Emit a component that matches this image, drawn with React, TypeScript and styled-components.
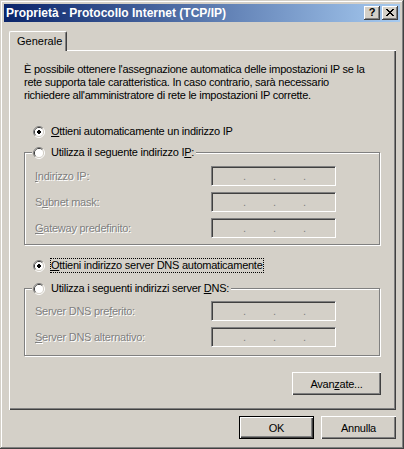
import React from 'react';
import styled, { createGlobalStyle } from 'styled-components';

const face = '#D4D0C8';
const light = '#FFFFFF';
const shadow = '#808080';
const dark = '#404040';

const GlobalStyle = createGlobalStyle`
    html, body {
        margin: 0;
        padding: 0;
        background: ${face};
    }
    body {
        font-family: 'Liberation Sans', Arial, sans-serif;
        font-size: 11px;
        color: #000;
    }
    * {
        box-sizing: border-box;
    }
`;

const Window = styled.div`
    width: 404px;
    height: 449px;
    padding: 4px;
    background: ${face};
    box-shadow: inset -1px -1px 0 ${dark}, inset 1px 1px 0 ${face}, inset -2px -2px 0 ${shadow},
        inset 2px 2px 0 ${light};
    display: flex;
    flex-direction: column;
`;

const TitleBar = styled.div`
    flex: none;
    height: 18px;
    display: flex;
    align-items: center;
    padding: 0 2px 0 2px;
    background: linear-gradient(to right, #0a246a, #a6caf0);
`;

const Title = styled.span`
    flex: 1;
    color: #fff;
    font-weight: bold;
    font-size: 12px;
    white-space: nowrap;
`;

const CaptionButton = styled.button<{ $gap?: number }>`
    width: 16px;
    height: 14px;
    margin-left: ${(p) => p.$gap ?? 0}px;
    padding: 0 0 1px 0;
    border: 0;
    background: ${face};
    box-shadow: inset -1px -1px 0 ${dark}, inset 1px 1px 0 ${light}, inset -2px -2px 0 ${shadow};
    display: flex;
    align-items: center;
    justify-content: center;
    font-family: 'Liberation Sans', Arial, sans-serif;
    font-weight: bold;
    font-size: 11px;
    line-height: 11px;
    color: #000;
`;

const Body = styled.div`
    flex: 1;
    display: flex;
    flex-direction: column;
    padding: 9px 4px 6px 5px;
`;

const TabStrip = styled.div`
    display: flex;
`;

const Tab = styled.div`
    position: relative;
    z-index: 1;
    width: 58px;
    height: 20px;
    margin-bottom: -1px;
    padding: 3px 0 0 7px;
    line-height: 13px;
    background: ${face};
    border-top: 1px solid ${light};
    border-left: 1px solid ${light};
    border-right: 1px solid ${dark};
    border-radius: 2px 2px 0 0;
    box-shadow: inset -1px 0 0 ${shadow};
`;

const Panel = styled.div`
    flex: 1;
    display: flex;
    flex-direction: column;
    padding: 13px 15px 0 15px;
    background: ${face};
    box-shadow: inset 1px 1px 0 ${light}, inset -1px -1px 0 ${dark}, inset -2px -2px 0 ${shadow};
`;

const Intro = styled.p`
    margin: 0;
    line-height: 13px;
    letter-spacing: -0.25px;
    white-space: nowrap;
`;

const RadioRow = styled.div<{ $top: number }>`
    margin-top: ${(p) => p.$top}px;
    padding-left: 9px;
    height: 13px;
    display: flex;
    align-items: center;
    gap: 6px;
`;

const RadioText = styled.span<{ $focused?: boolean }>`
    display: inline-block;
    line-height: 13px;
    letter-spacing: -0.25px;
    white-space: nowrap;
    outline: ${(p) => (p.$focused ? '1px dotted #000' : 'none')};
`;

const RadioSvg = styled.svg`
    flex: none;
    display: block;
`;

const Group = styled.fieldset<{ $top: number; $padTop: number; $padBottom: number }>`
    margin: ${(p) => p.$top}px 1px 0 0;
    padding: ${(p) => p.$padTop}px 0 ${(p) => p.$padBottom}px 7px;
    border: 1px solid ${shadow};
    box-shadow: inset 1px 1px 0 ${light}, 1px 1px 0 ${light};
    min-width: 0;
`;

const GroupLegend = styled.legend`
    margin-left: 0;
    padding: 0 2px 0 1px;
    height: 13px;
    display: flex;
    align-items: center;
    gap: 6px;
    background: ${face};
`;

const FieldList = styled.div`
    display: flex;
    flex-direction: column;
    gap: 6px;
    padding-left: 3px;
`;

const FieldRow = styled.div`
    display: flex;
    align-items: center;
    height: 20px;
`;

const FieldLabel = styled.span`
    width: 176px;
    color: ${shadow};
    text-shadow: 1px 1px 0 ${light};
    letter-spacing: -0.25px;
    white-space: nowrap;
`;

const IpBox = styled.div`
    width: 125px;
    height: 20px;
    display: flex;
    align-items: flex-start;
    padding-top: 3px;
    background: ${face};
    border-top: 1px solid ${shadow};
    border-left: 1px solid ${shadow};
    border-bottom: 1px solid ${light};
    border-right: 1px solid ${light};
    box-shadow: inset 1px 1px 0 ${dark};
`;

const IpSeg = styled.span<{ $w: number }>`
    width: ${(p) => p.$w}px;
    flex: none;
`;

const IpDot = styled.span`
    width: 3px;
    flex: none;
    line-height: 13px;
    color: ${shadow};
`;

const PushButton = styled.button<{ $width: number; $isDefault?: boolean }>`
    width: ${(p) => p.$width}px;
    height: 23px;
    padding: 0;
    font-family: 'Liberation Sans', Arial, sans-serif;
    font-size: 11px;
    letter-spacing: -0.25px;
    color: #000;
    background: ${face};
    border: ${(p) => (p.$isDefault ? '1px solid #000' : '0')};
    box-shadow: inset 1px 1px 0 ${light}, inset -1px -1px 0 ${dark}, inset -2px -2px 0 ${shadow};
`;

const PanelActions = styled.div`
    margin-top: 16px;
    display: flex;
    justify-content: flex-end;
`;

const DialogButtons = styled.div`
    margin-top: 6px;
    display: flex;
    justify-content: flex-end;
    gap: 7px;
`;

const Radio: React.FC<{ checked?: boolean }> = ({ checked }) => (
    <RadioSvg width="12" height="12" viewBox="0 0 12 12">
        <path d="M2.11 9.89A5.5 5.5 0 0 1 9.89 2.11" stroke={shadow} fill="none" />
        <path d="M9.89 2.11A5.5 5.5 0 0 1 2.11 9.89" stroke={light} fill="none" />
        <path d="M2.82 9.18A4.5 4.5 0 0 1 9.18 2.82" stroke={dark} fill="none" />
        <path d="M9.18 2.82A4.5 4.5 0 0 1 2.82 9.18" stroke={face} fill="none" />
        <circle cx="6" cy="6" r="4" fill={light} />
        {checked && (
            <g fill="#000" shapeRendering="crispEdges">
                <rect x="4" y="5" width="4" height="2" />
                <rect x="5" y="4" width="2" height="4" />
            </g>
        )}
    </RadioSvg>
);

const CloseGlyph = () => (
    <svg width="8" height="7" viewBox="0 0 8 7" shapeRendering="crispEdges">
        <path
            fill="#000"
            d="M0 0h2v1H0zM6 0h2v1H6zM1 1h2v1H1zM5 1h2v1H5zM2 2h4v1H2zM3 3h2v1H3zM2 4h4v1H2zM1 5h2v1H1zM5 5h2v1H5zM0 6h2v1H0zM6 6h2v1H6z"
        />
    </svg>
);

const IpField = () => (
    <IpBox>
        <IpSeg $w={31} />
        <IpDot>.</IpDot>
        <IpSeg $w={27} />
        <IpDot>.</IpDot>
        <IpSeg $w={27} />
        <IpDot>.</IpDot>
    </IpBox>
);

export default function App() {
    return (
        <>
            <GlobalStyle />
            <Window>
                <TitleBar>
                    <Title>Proprietà - Protocollo Internet (TCP/IP)</Title>
                    <CaptionButton>?</CaptionButton>
                    <CaptionButton $gap={2}>
                        <CloseGlyph />
                    </CaptionButton>
                </TitleBar>
                <Body>
                    <TabStrip>
                        <Tab>Generale</Tab>
                    </TabStrip>
                    <Panel>
                        <Intro>
                            È possibile ottenere l'assegnazione automatica delle impostazioni IP se la
                            <br />
                            rete supporta tale caratteristica. In caso contrario, sarà necessario
                            <br />
                            richiedere all'amministratore di rete le impostazioni IP corrette.
                        </Intro>

                        <RadioRow $top={23}>
                            <Radio checked />
                            <RadioText>
                                <u>O</u>ttieni automaticamente un indirizzo IP
                            </RadioText>
                        </RadioRow>

                        <Group $top={8} $padTop={7} $padBottom={6}>
                            <GroupLegend>
                                <Radio />
                                <RadioText>
                                    Utilizza il seguente indirizzo I<u>P</u>:
                                </RadioText>
                            </GroupLegend>
                            <FieldList>
                                <FieldRow>
                                    <FieldLabel>
                                        <u>I</u>ndirizzo IP:
                                    </FieldLabel>
                                    <IpField />
                                </FieldRow>
                                <FieldRow>
                                    <FieldLabel>
                                        S<u>u</u>bnet mask:
                                    </FieldLabel>
                                    <IpField />
                                </FieldRow>
                                <FieldRow>
                                    <FieldLabel>
                                        <u>G</u>ateway predefinito:
                                    </FieldLabel>
                                    <IpField />
                                </FieldRow>
                            </FieldList>
                        </Group>

                        <RadioRow $top={14}>
                            <Radio checked />
                            <RadioText $focused>
                                <u>O</u>ttieni indirizzo server DNS automaticamente
                            </RadioText>
                        </RadioRow>

                        <Group $top={10} $padTop={6} $padBottom={8}>
                            <GroupLegend>
                                <Radio />
                                <RadioText>
                                    Utilizza i seguenti indirizzi server <u>D</u>NS:
                                </RadioText>
                            </GroupLegend>
                            <FieldList>
                                <FieldRow>
                                    <FieldLabel>
                                        Server DNS pre<u>f</u>erito:
                                    </FieldLabel>
                                    <IpField />
                                </FieldRow>
                                <FieldRow>
                                    <FieldLabel>
                                        <u>S</u>erver DNS alternativo:
                                    </FieldLabel>
                                    <IpField />
                                </FieldRow>
                            </FieldList>
                        </Group>

                        <PanelActions>
                            <PushButton $width={89}>
                                Avan<u>z</u>ate...
                            </PushButton>
                        </PanelActions>
                    </Panel>
                    <DialogButtons>
                        <PushButton $width={75} $isDefault>
                            OK
                        </PushButton>
                        <PushButton $width={75}>Annulla</PushButton>
                    </DialogButtons>
                </Body>
            </Window>
        </>
    );
}
